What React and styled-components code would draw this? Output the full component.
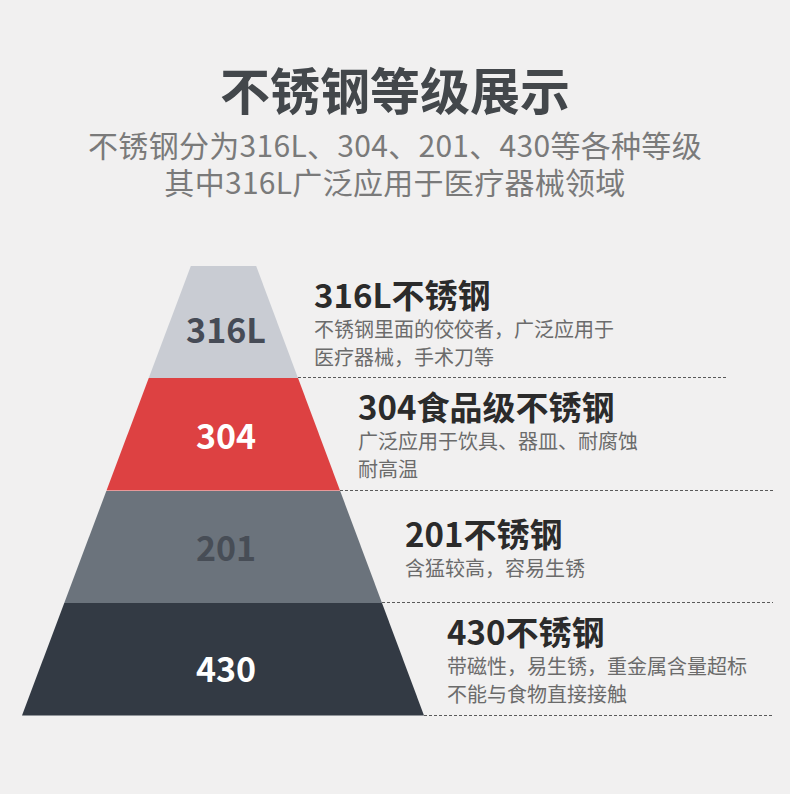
import React from 'react';
import styled, { createGlobalStyle } from 'styled-components';

const GlobalStyle = createGlobalStyle`
    body {
        margin: 0;
        background-color: #f1f0f0;
        font-family: "Noto Sans CJK SC", "Noto Sans", sans-serif;
    }
`

const Page = styled.div`
    width: 790px;
    height: 794px;
    overflow: hidden;
`

const Header = styled.header`
    padding-top: 58px;
    text-align: center;
`

const Title = styled.h1`
    margin: 0;
    font-size: 50px;
    line-height: 60px;
    font-weight: 700;
    color: #43474b;
`

const Subtitle = styled.p`
    margin: 8px 0 0;
    font-size: 30px;
    line-height: 37px;
    font-weight: 400;
    letter-spacing: 0.3px;
    color: #7a7a7a;
`

const Pyramid = styled.section`
    margin-top: 65.5px;
`

const Row = styled.div`
    display: grid;
    height: 112.5px;
`

const Band = styled.div`
    grid-area: 1 / 1;
    margin-left: 22px;
    width: 402px;
    display: flex;
    align-items: center;
    justify-content: center;
    box-sizing: border-box;
    padding-left: 6px;
    padding-top: ${p => p.shift * 2}px;
    background-color: ${p => p.bg};
    clip-path: ${p => p.clip};
    font-size: 34px;
    font-weight: 700;
    color: ${p => p.fg};
`

const Info = styled.div`
    grid-area: 1 / 1;
    display: flex;
    flex-direction: column;
    justify-content: center;
    padding-left: ${p => p.indent}px;
`

const Heading = styled.h3`
    margin: 0;
    font-size: 33px;
    line-height: 40px;
    font-weight: 700;
    color: #2b2b2b;
`

const Desc = styled.p`
    margin: 1px 0 0;
    font-size: 20px;
    line-height: 27px;
    color: #6b6b6b;
`

const Rule = styled.div`
    grid-area: 1 / 1;
    align-self: end;
    height: 1px;
    margin-left: ${p => p.from}px;
    width: ${p => p.to - p.from}px;
    background: repeating-linear-gradient(to right, #5a5a5a 0 3px, transparent 3px 5px);
`

const rows = [
    { label: '316L', bg: '#c9ccd3', fg: '#464b56', shift: 7, indent: 314, end: 728,
      title: '316L不锈钢', desc: ['不锈钢里面的佼佼者，广泛应用于', '医疗器械，手术刀等'] },
    { label: '304', bg: '#dd4142', fg: '#ffffff', shift: -1, indent: 358, end: 773,
      title: '304食品级不锈钢', desc: ['广泛应用于饮具、器皿、耐腐蚀', '耐高温'] },
    { label: '201', bg: '#6b737c', fg: '#474d56', shift: -2, indent: 405, end: 773,
      title: '201不锈钢', desc: ['含猛较高，容易生锈'] },
    { label: '430', bg: '#333a44', fg: '#ffffff', shift: 8, indent: 447, end: 773,
      title: '430不锈钢', desc: ['带磁性，易生锈，重金属含量超标', '不能与食物直接接触'] },
]

const ROW_H = 112.5;
const TOTAL_H = 450;
const leftAt = t => 169 * (1 - t / TOTAL_H);
const rightAt = t => 234 + 168 * t / TOTAL_H;

const clipFor = i => {
    const t0 = i * ROW_H;
    const t1 = t0 + ROW_H;
    return `polygon(${leftAt(t0)}px 0, ${rightAt(t0)}px 0, ${rightAt(t1)}px 100%, ${leftAt(t1)}px 100%)`;
}

const App = () => {
    return (
        <Page>
            <GlobalStyle />
            <Header>
                <Title>不锈钢等级展示</Title>
                <Subtitle>
                    不锈钢分为316L、304、201、430等各种等级<br />
                    其中316L广泛应用于医疗器械领域
                </Subtitle>
            </Header>
            <Pyramid>
                {rows.map((row, i) => (
                    <Row key={row.label}>
                        <Band bg={row.bg} fg={row.fg} shift={row.shift} clip={clipFor(i)}>
                            {row.label}
                        </Band>
                        <Info indent={row.indent}>
                            <Heading>{row.title}</Heading>
                            {row.desc.map(line => <Desc key={line}>{line}</Desc>)}
                        </Info>
                        <Rule from={22 + rightAt((i + 1) * ROW_H)} to={row.end} />
                    </Row>
                ))}
            </Pyramid>
        </Page>
    );
};

export default App;
